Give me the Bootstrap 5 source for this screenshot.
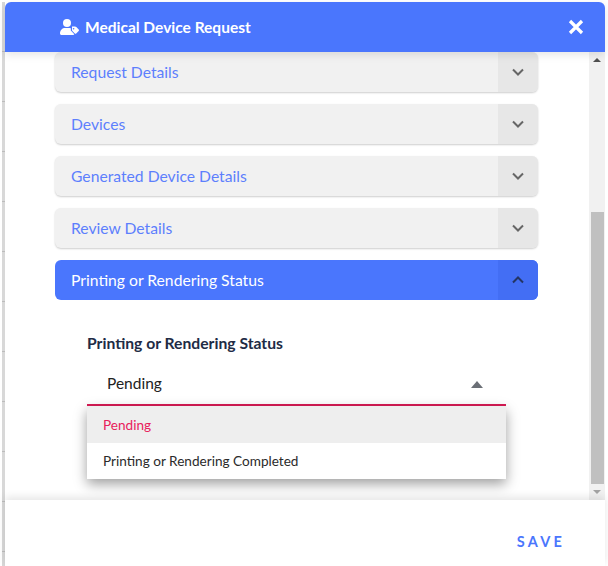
<!DOCTYPE html>
<html lang="en">

<head>
  <meta charset="UTF-8">
  <meta name="viewport" content="width=device-width, initial-scale=1.0">
  <link href="https://cdn.jsdelivr.net/npm/bootstrap@5.3.2/dist/css/bootstrap.min.css" rel="stylesheet">
  <title>Medical Device Request</title>
  <style>
    html, body { height: 100%; }
    body {
      font-family: Lato, "Open Sans", sans-serif;
      background: #fff;
      overflow: hidden;
    }
    .page-frame { height: 566px; padding: 2px 1px 0 2px; }
    .page-strip {
      width: 3px;
      background: repeating-linear-gradient(#d8d8d8 0 49px, #bcbcbc 49px 50px);
    }
    .dialog-box { width: 600px; background: #fff; }
    .dialog-head {
      height: 50px;
      background: #4a76fd;
      color: #fff;
      border-radius: 6px 6px 0 0;
      padding: 0 21px 0 55px;
      box-shadow: 0 3px 8px rgba(0, 0, 0, .1);
      position: relative;
      z-index: 3;
    }
    .dialog-title { font-size: 15.5px; font-weight: 700; line-height: 1; margin: 2px 0 0 -2px; }
    .dialog-mid { height: 448px; }
    .dialog-scroll { padding: 0 51px 0 50px; position: relative; }
    .acc-row {
      height: 40px;
      margin-bottom: 12px;
      background: #f1f1f1;
      color: #5d7ffd;
      border-radius: 6px;
      box-shadow: 0 1px 2px rgba(0, 0, 0, .2);
      font-size: 15.7px;
      overflow: hidden;
    }
    .acc-label { padding: 2px 0 0 16px; }
    .acc-toggle { width: 40px; background: #e7e7e7; color: #666; }
    .acc-row.is-open { background: #4a76fd; color: #fff; box-shadow: none; }
    .acc-row.is-open .acc-toggle { background: #436ef4; color: #243564; }
    .status-panel { padding: 33px 32px 0; }
    .status-label { font-size: 15.7px; font-weight: 700; color: #212b45; line-height: 20px; }
    .status-select {
      height: 44px;
      margin-top: 9px;
      padding: 2px 23px 0 20px;
      border-bottom: 2px solid #d81b55;
      font-size: 15.5px;
      color: #222;
    }
    .caret-up {
      border-left: 6px solid transparent;
      border-right: 6px solid transparent;
      border-bottom: 7px solid #6b6f76;
    }
    .status-menu {
      position: absolute;
      left: 82px;
      top: 354px;
      width: 419px;
      background: #fff;
      box-shadow: 0 5px 12px rgba(0, 0, 0, .38);
      font-size: 13.6px;
      z-index: 2;
    }
    .status-option { height: 36.5px; padding-left: 16px; color: #2b2b2b; }
    .status-option.is-current { background: #eee; color: #e8215c; padding-top: 1px; }
    .fake-scroll { width: 16px; background: #f1f1f1; flex-shrink: 0; }
    .fake-arrow { height: 17px; }
    .fake-track { flex: 1; padding: 143px 1px 0 2px; }
    .fake-thumb { height: 272px; background: #c0c0c0; }
    .arrow-up {
      border-left: 4px solid transparent;
      border-right: 4px solid transparent;
      border-bottom: 4px solid #505050;
    }
    .arrow-down {
      border-left: 4px solid transparent;
      border-right: 4px solid transparent;
      border-top: 4px solid #a3a3a3;
    }
    .dialog-foot {
      height: 66px;
      padding: 0 40px 13px 0;
      box-shadow: 0 -3px 8px rgba(0, 0, 0, .1);
      position: relative;
      z-index: 1;
      background: #fff;
    }
    .save-btn {
      color: #4a76fd;
      font-size: 14.5px;
      font-weight: 700;
      letter-spacing: 3.2px;
      padding: 0;
      border: 0;
    }
  </style>
</head>

<body>
  <div class="page-frame d-flex">
    <div class="page-strip"></div>
    <div class="dialog-box d-flex flex-column">
      <div class="dialog-head d-flex align-items-center justify-content-between">
        <div class="d-flex align-items-center gap-2">
          <svg width="19" height="16" viewBox="0 0 19 16" fill="#fff">
            <circle cx="7" cy="4" r="4"></circle>
            <path d="M0 14.5C0 11 2.5 9 5 9h4c.7 0 1.3.1 1.8.3v2.2l3.5 3.7c-.2.4-.6.8-1.2.8H1.5C.7 16 0 15.4 0 14.5z"></path>
            <path fill-rule="evenodd" d="M12 7.5h3c.5 0 .9.2 1.3.5l2.4 2.5c.4.4.4 1 0 1.4l-2.5 2.5c-.4.4-1 .4-1.4 0l-2.4-2.5c-.3-.3-.4-.7-.4-1.2zM13.6 9a.8.8 0 1 0 0 1.6.8.8 0 0 0 0-1.6z"></path>
          </svg>
          <span class="dialog-title">Medical Device Request</span>
        </div>
        <svg width="16" height="16" viewBox="0 0 16 16" stroke="#fff" stroke-width="3.2" fill="none">
          <path d="M2 2l12 12M14 2L2 14"></path>
        </svg>
      </div>

      <div class="dialog-mid d-flex">
        <div class="dialog-scroll flex-grow-1">
          <div class="acc-row d-flex align-items-center justify-content-between">
            <span class="acc-label">Request Details</span>
            <span class="acc-toggle h-100 d-flex align-items-center justify-content-center">
              <svg width="12" height="8" viewBox="0 0 12 8" fill="none" stroke="currentColor" stroke-width="2"><path d="M1 1.5l5 5 5-5"></path></svg>
            </span>
          </div>
          <div class="acc-row d-flex align-items-center justify-content-between">
            <span class="acc-label">Devices</span>
            <span class="acc-toggle h-100 d-flex align-items-center justify-content-center">
              <svg width="12" height="8" viewBox="0 0 12 8" fill="none" stroke="currentColor" stroke-width="2"><path d="M1 1.5l5 5 5-5"></path></svg>
            </span>
          </div>
          <div class="acc-row d-flex align-items-center justify-content-between">
            <span class="acc-label">Generated Device Details</span>
            <span class="acc-toggle h-100 d-flex align-items-center justify-content-center">
              <svg width="12" height="8" viewBox="0 0 12 8" fill="none" stroke="currentColor" stroke-width="2"><path d="M1 1.5l5 5 5-5"></path></svg>
            </span>
          </div>
          <div class="acc-row d-flex align-items-center justify-content-between">
            <span class="acc-label">Review Details</span>
            <span class="acc-toggle h-100 d-flex align-items-center justify-content-center">
              <svg width="12" height="8" viewBox="0 0 12 8" fill="none" stroke="currentColor" stroke-width="2"><path d="M1 1.5l5 5 5-5"></path></svg>
            </span>
          </div>
          <div class="acc-row is-open d-flex align-items-center justify-content-between mb-0">
            <span class="acc-label">Printing or Rendering Status</span>
            <span class="acc-toggle h-100 d-flex align-items-center justify-content-center">
              <svg width="12" height="8" viewBox="0 0 12 8" fill="none" stroke="currentColor" stroke-width="2"><path d="M1 6.5l5-5 5 5"></path></svg>
            </span>
          </div>

          <div class="status-panel">
            <div class="status-label">Printing or Rendering Status</div>
            <div class="status-select d-flex align-items-center justify-content-between">
              <span>Pending</span>
              <span class="caret-up"></span>
            </div>
          </div>
          <div class="status-menu">
            <div class="status-option is-current d-flex align-items-center">Pending</div>
            <div class="status-option d-flex align-items-center">Printing or Rendering Completed</div>
          </div>
        </div>

        <div class="fake-scroll d-flex flex-column">
          <div class="fake-arrow d-flex align-items-center justify-content-center"><span class="arrow-up"></span></div>
          <div class="fake-track"><div class="fake-thumb"></div></div>
          <div class="fake-arrow d-flex align-items-center justify-content-center"><span class="arrow-down"></span></div>
        </div>
      </div>

      <div class="dialog-foot d-flex align-items-end justify-content-end">
        <button type="button" class="btn save-btn">SAVE</button>
      </div>
    </div>
  </div>
  <script src="https://cdn.jsdelivr.net/npm/bootstrap@5.3.2/dist/js/bootstrap.bundle.min.js"></script>
</body>

</html>
